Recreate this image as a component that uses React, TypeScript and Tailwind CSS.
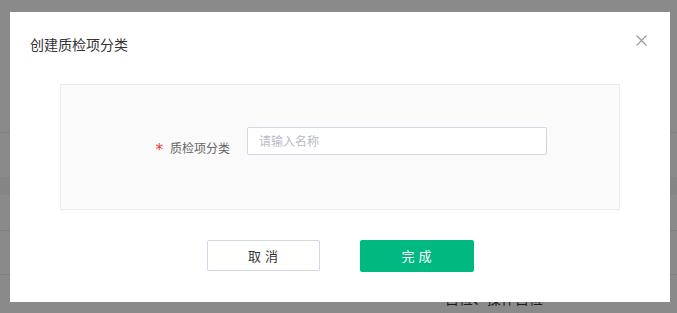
import React from "react";

const cjk = { fontFamily: '"Noto Sans CJK SC", "Noto Sans", sans-serif' };

export default function App() {
  return (
    <div className="relative w-[677px] h-[313px] overflow-hidden bg-white" style={cjk}>
      {/* underlying page */}
      <div className="flex flex-col">
        <div className="h-[133px] border-b border-[#ececec]" />
        <div className="h-[44px]" />
        <div className="h-[18px] bg-[#f6f6f6]" />
        <div className="h-[36px] border-b border-[#ececec]" />
        <div className="h-[44px] border-b border-[#ececec]" />
        <div className="flex pl-[445px] pt-[13px]">
          <span className="text-[14px] leading-[20px] text-[#333]">目检、操作目检</span>
        </div>
      </div>

      {/* overlay */}
      <div className="absolute inset-0 bg-[rgba(0,0,0,0.46)]" />

      {/* modal */}
      <div className="absolute left-[10px] top-[12px] w-[660px] h-[290px] bg-white flex flex-col">
        <div className="flex items-center justify-between h-[40px] mt-[12px] pl-[20px] pr-[23px]">
          <span className="text-[14px] leading-[20px] text-[#333]">创建质检项分类</span>
          <svg width="11" height="11" viewBox="0 0 11 11" className="mt-[-8px]">
            <path d="M0.5 0.5 L10.5 10.5 M10.5 0.5 L0.5 10.5" stroke="#999" strokeWidth="1.1" fill="none" />
          </svg>
        </div>
        <div className="mx-[50px] mt-[20px] h-[126px] bg-[#fafafa] border border-[#ebebef] flex items-start pt-[42px]">
          <div className="w-[169px] flex justify-end items-center mt-[7px] h-[28px]">
            <span
              className="text-[#e4393c] text-[15px] leading-[15px] mr-[7px] mt-[4px]"
              style={{ fontFamily: '"DejaVu Sans", sans-serif' }}
            >
              *
            </span>
            <span className="text-[12px] leading-[28px] text-[#666]">质检项分类</span>
          </div>
          <div className="ml-[17px] w-[300px] h-[28px] bg-white border border-[#d3d6e3] rounded-[2px] flex items-center pl-[11px]">
            <span className="text-[12px] text-[#b8bcc4]">请输入名称</span>
          </div>
        </div>
        <div className="flex justify-center gap-[40px] mt-[30px]">
          <div className="w-[113px] h-[31px] border border-[#d3d6e3] rounded-[2px] bg-white flex items-center justify-center">
            <span className="text-[13px] text-[#333] tracking-[4px] pl-[4px]">取消</span>
          </div>
          <div className="w-[114px] h-[32px] rounded-[2px] bg-[#00b981] flex items-center justify-center">
            <span className="text-[13px] text-white tracking-[4px] pl-[4px]">完成</span>
          </div>
        </div>
      </div>
    </div>
  );
}
